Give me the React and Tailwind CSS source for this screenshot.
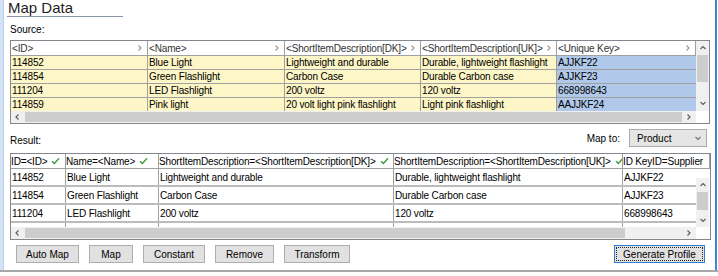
import React from 'react'

const srcCols = [
  { label: '<ID>', w: 137 },
  { label: '<Name>', w: 137 },
  { label: '<ShortItemDescription[DK]>', w: 136 },
  { label: '<ShortItemDescription[UK]>', w: 136 },
  { label: '<Unique Key>', w: 139 },
]

const rows = [
  ['114852', 'Blue Light', 'Lightweight and durable', 'Durable, lightweight flashlight', 'AJJKF22'],
  ['114854', 'Green Flashlight', 'Carbon Case', 'Durable Carbon case', 'AJJKF23'],
  ['111204', 'LED Flashlight', '200 voltz', '120 voltz', '668998643'],
  ['114859', 'Pink light', '20 volt light pink flashlight', 'Light pink flashlight', 'AAJJKF24'],
]

const resCols = [
  { label: 'ID=<ID>', w: 55, check: true },
  { label: 'Name=<Name>', w: 93, check: true },
  { label: 'ShortItemDescription=<ShortItemDescription[DK]>', w: 235, check: true },
  { label: 'ShortItemDescription=<ShortItemDescription[UK]>', w: 229, check: true },
  { label: 'ID KeyID=Supplier', w: 87 },
]

function Chev({ dir = 'right', color = '#606060' }) {
  const d = {
    right: 'M2.5 1.5 L5 4 L2.5 6.5',
    left: 'M4.5 1.5 L2 4 L4.5 6.5',
    up: 'M1.5 5 L4 2.5 L6.5 5',
    down: 'M1.5 3 L4 5.5 L6.5 3',
  }[dir]
  return (
    <svg width="8" height="8" viewBox="0 0 8 8" className="shrink-0">
      <path d={d} fill="none" stroke={color} strokeWidth="1.2" />
    </svg>
  )
}

function Check() {
  return (
    <svg width="9" height="8" viewBox="0 0 9 8" className="shrink-0 ml-[4px]">
      <path d="M1 4.2 L3.4 6.5 L8 1.2" fill="none" stroke="#3a9a3a" strokeWidth="1.3" />
    </svg>
  )
}

function VScroll({ top, thumb, gap }) {
  return (
    <div className="w-[13px] flex flex-col bg-[#f0f0f0]">
      {top > 0 && <div className="bg-white" style={{ height: top }} />}
      <div className="h-[14px] flex items-center justify-center">
        <Chev dir="up" />
      </div>
      <div className="bg-[#cdcdcd] mx-[1px]" style={{ height: thumb }} />
      <div style={{ height: gap }} />
      <div className="flex-1 flex items-center justify-center">
        <Chev dir="down" />
      </div>
    </div>
  )
}

function HScroll({ thumbW }) {
  return (
    <div className="flex h-[12px]">
      <div className="w-[685px] flex bg-[#f0f0f0]">
        <div className="w-[14px] flex items-center justify-center">
          <Chev dir="left" />
        </div>
        <div className="bg-[#cdcdcd] my-[1px]" style={{ width: thumbW }} />
        <div className="flex-1" />
        <div className="w-[14px] flex items-center justify-center">
          <Chev dir="right" />
        </div>
      </div>
      <div className="flex-1 bg-white" />
    </div>
  )
}

function Btn({ w, children }) {
  return (
    <div
      className="h-[18px] flex items-center justify-center bg-[#e1e1e1] border border-[#adadad] text-[10px] text-black"
      style={{ width: w }}
    >
      {children}
    </div>
  )
}

export default function App() {
  return (
    <div className="w-[718px] h-[276px] bg-white flex flex-col font-['Liberation_Sans',Arial,sans-serif] text-black overflow-hidden">
      <div className="flex h-[270px]">
        <div className="w-[4px] bg-[#d3e3f5] border-r border-[#b9d0ec]" />
        <div className="w-[711px] flex flex-col">
          <div className="ml-[3px] w-[116px] h-[17px] border-b border-[#8796ad] pl-[1px] text-[15px] leading-[16px] text-[#1e1e1e]">
            Map Data
          </div>

          <div className="mt-[7px] pl-[6px] h-[12px] text-[10px] leading-[12px]">Source:</div>

          <div className="mt-[4px] ml-[6px] w-[700px] h-[84px] border border-[#828790] flex flex-col tracking-[-0.15px]">
            <div className="flex h-[70px]">
              <div className="w-[685px] overflow-hidden flex flex-col">
                <div className="flex h-[15px] shrink-0 bg-white">
                  {srcCols.map((c) => (
                    <div
                      key={c.label}
                      className="shrink-0 flex items-center justify-between border-r border-b border-[#a0a0a0] pl-[1px] pr-[3px] text-[10px] text-[#333]"
                      style={{ width: c.w }}
                    >
                      <span className="whitespace-nowrap">{c.label}</span>
                      <Chev dir="right" color="#9a9a9a" />
                    </div>
                  ))}
                </div>
                {rows.map((r, i) => (
                  <div key={i} className="flex h-[14px] shrink-0">
                    {r.map((v, j) => (
                      <div
                        key={j}
                        className={
                          'shrink-0 flex items-center border-b border-[#a0a0a0] pl-[1px] text-[10px] whitespace-nowrap ' +
                          (j === 4 ? 'bg-[#b0c9ea]' : 'bg-[#fdf6c6] border-r')
                        }
                        style={{ width: srcCols[j].w }}
                      >
                        {v}
                      </div>
                    ))}
                  </div>
                ))}
              </div>
              <VScroll top={0} thumb={27} gap={13} />
            </div>
            <HScroll thumbW={657} />
          </div>

          <div className="mt-[5px] h-[18px] flex items-center">
            <div className="pl-[6px] mt-[4px] text-[10px]">Result:</div>
            <div className="ml-auto mr-[9px] text-[10px]">Map to:</div>
            <div className="mr-[8px] w-[78px] h-[18px] bg-[#e5e5e5] border border-[#acacac] flex items-center justify-between pl-[7px] pr-[4px] text-[10px]">
              <span>Product</span>
              <Chev dir="down" color="#707070" />
            </div>
          </div>

          <div className="mt-[6px] ml-[6px] w-[701px] h-[87px] border border-[#828790] flex flex-col tracking-[-0.15px]">
            <div className="flex h-[15px] shrink-0 overflow-hidden border-b border-[#a0a0a0]">
              {resCols.map((c) => (
                <div
                  key={c.label}
                  className="shrink-0 flex items-center border-r border-[#a0a0a0] text-[10px] whitespace-nowrap overflow-hidden"
                  style={{ width: c.w }}
                >
                  <span>{c.label}</span>
                  {c.check && <Check />}
                </div>
              ))}
            </div>
            <div className="flex h-[58px]">
              <div className="w-[685px] overflow-hidden flex flex-col">
                {rows.slice(0, 3).map((r, i) => (
                  <div key={i} className="flex h-[18px] shrink-0 border-b-2 border-[#bcbcbc]">
                    {r.map((v, j) => (
                      <div
                        key={j}
                        className="shrink-0 flex items-center border-r border-[#a0a0a0] text-[10px] whitespace-nowrap pl-[1px]"
                        style={{ width: resCols[j].w }}
                      >
                        {v}
                      </div>
                    ))}
                  </div>
                ))}
                <div className="flex flex-1">
                  {resCols.map((c) => (
                    <div key={c.label} className="shrink-0 border-r border-[#a0a0a0]" style={{ width: c.w }} />
                  ))}
                </div>
              </div>
              <VScroll top={9} thumb={18} gap={3} />
            </div>
            <HScroll thumbW={600} />
          </div>

          <div className="mt-[5px] flex items-center pl-[12px] gap-[10px]">
            <Btn w={63}>Auto Map</Btn>
            <Btn w={44}>Map</Btn>
            <Btn w={62}>Constant</Btn>
            <Btn w={59}>Remove</Btn>
            <Btn w={66}>Transform</Btn>
            <div className="ml-auto mr-[10px] w-[91px] h-[18px] border border-[#2f7bd0] bg-[#e1e1e1] p-[1px]">
              <div className="w-full h-full border border-dotted border-[#222] flex items-center justify-center text-[10px]">
                Generate Profile
              </div>
            </div>
          </div>
        </div>
        <div className="w-[2px] bg-[#3f86d3]" />
        <div className="w-[1px]" />
      </div>
      <div className="h-[2px] bg-[#a8a8a8]" />
    </div>
  )
}
